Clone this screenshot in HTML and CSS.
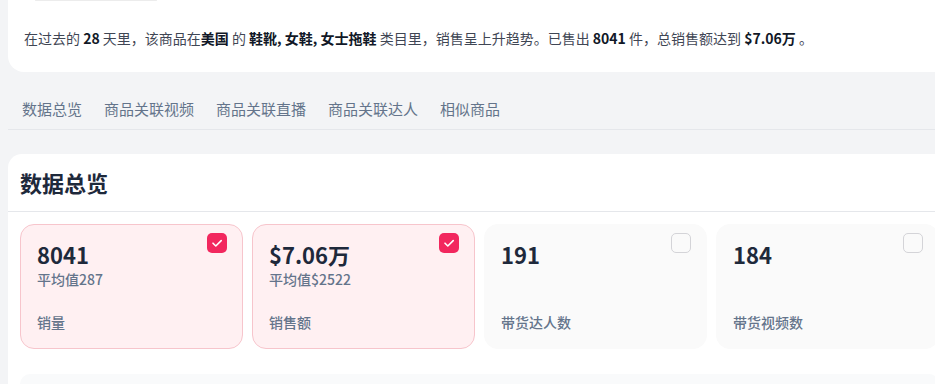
FILE: index.html
```html
<!DOCTYPE html>
<html lang="zh-CN">
<head>
<meta charset="utf-8">
<title>商品数据</title>
<link rel="stylesheet" href="styles.css">
</head>
<body>
<div class="page">
  <section class="summary-card">
    <div class="top-bar"></div>
    <p class="summary">在过去的 <b>28</b> 天里，该商品在<b>美国</b> 的 <b>鞋靴, 女鞋, 女士拖鞋</b> 类目里，销售呈上升趋势。已售出 <b>8041</b> 件，总销售额达到 <b>$7.06万</b> 。</p>
  </section>

  <nav class="tabs">
    <span class="tab">数据总览</span>
    <span class="tab">商品关联视频</span>
    <span class="tab">商品关联直播</span>
    <span class="tab">商品关联达人</span>
    <span class="tab">相似商品</span>
  </nav>

  <section class="main-card">
    <h2 class="title">数据总览</h2>
    <div class="metrics">
      <div class="metric active">
        <span class="check on"><svg viewBox="0 0 20 20" width="20" height="20"><path d="M6 10.2l2.8 2.8L14.2 7.6" fill="none" stroke="#fff" stroke-width="1.6" stroke-linecap="round" stroke-linejoin="round"/></svg></span>
        <div class="value">8041</div>
        <div class="avg">平均值287</div>
        <div class="label">销量</div>
      </div>
      <div class="metric active">
        <span class="check on"><svg viewBox="0 0 20 20" width="20" height="20"><path d="M6 10.2l2.8 2.8L14.2 7.6" fill="none" stroke="#fff" stroke-width="1.6" stroke-linecap="round" stroke-linejoin="round"/></svg></span>
        <div class="value">$7.06万</div>
        <div class="avg">平均值$2522</div>
        <div class="label">销售额</div>
      </div>
      <div class="metric">
        <span class="check"></span>
        <div class="value">191</div>
        <div class="label">带货达人数</div>
      </div>
      <div class="metric">
        <span class="check"></span>
        <div class="value">184</div>
        <div class="label">带货视频数</div>
      </div>
    </div>
    <div class="next-block"></div>
  </section>
</div>
</body>
</html>
```

FILE: styles.css
```css
html, body {
  margin: 0;
  padding: 0;
  overflow: hidden;
}
body {
  background: #f3f4f6;
  font-family: "Noto Sans CJK SC", "Noto Sans", sans-serif;
  width: 935px;
  height: 384px;
}
.page {
  padding-left: 8px;
  width: 943px;
}
.summary-card {
  background: #fff;
  border-radius: 0 0 0 16px;
  padding: 0 16px 23px;
}
.top-bar {
  width: 122px;
  height: 1px;
  margin-left: 11px;
  background: #ececec;
  border-radius: 1px;
}
.summary {
  margin: 26px 0 0;
  font-size: 14px;
  line-height: 22px;
  color: #3f4654;
  white-space: nowrap;
}
.summary b {
  color: #111827;
  font-weight: 700;
}
.tabs {
  display: flex;
  gap: 22px;
  margin-top: 17px;
  padding-left: 14px;
  border-bottom: 1px solid #e5e7eb;
}
.tab {
  font-size: 15px;
  line-height: 40px;
  color: #64748b;
}
.main-card {
  margin-top: 24px;
  background: #fff;
  border-radius: 14px 0 0 0;
  height: 230px;
}
.title {
  margin: 0;
  padding: 13px 12px 14px;
  font-size: 22px;
  line-height: 30px;
  font-weight: 700;
  color: #1e293b;
  border-bottom: 1px solid #e5e7eb;
}
.metrics {
  display: flex;
  gap: 9px;
  padding: 12px 12px 0;
}
.metric {
  position: relative;
  box-sizing: border-box;
  width: 223px;
  height: 125px;
  flex: none;
  border: 1px solid #fafafa;
  border-radius: 14px;
  background: #fafafa;
  padding: 14px 16px 16px;
  display: flex;
  flex-direction: column;
}
.metric.active {
  background: #fff0f2;
  border-color: #f7c5cc;
}
.value {
  font-size: 22px;
  line-height: 30px;
  font-weight: 700;
  color: #1e293b;
}
.avg {
  font-size: 14px;
  line-height: 20px;
  font-weight: 500;
  color: #64748b;
}
.label {
  margin-top: auto;
  font-size: 14px;
  line-height: 20px;
  font-weight: 500;
  color: #64748b;
}
.check {
  position: absolute;
  top: 8px;
  right: 15px;
  box-sizing: border-box;
  width: 20px;
  height: 20px;
  border-radius: 5px;
  border: 1.5px solid #d4d4d8;
  background: #fafafa;
}
.check.on {
  background: #f2275e;
  border: none;
}
.check svg {
  display: block;
}
.next-block {
  margin: 25px 12px 0;
  height: 10px;
  background: #f9fafb;
  border-radius: 14px 14px 0 0;
}
```
